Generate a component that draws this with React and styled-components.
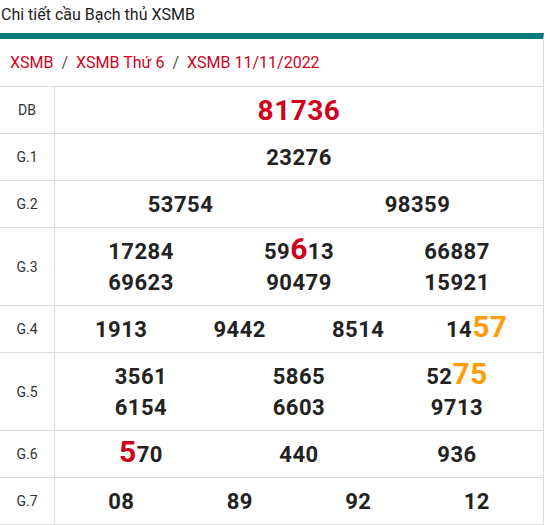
import React from "react";
import styled, { createGlobalStyle } from "styled-components";

const GlobalStyle = createGlobalStyle`
  body {
    margin: 0;
    background: #fff;
    font-family: Roboto, "Liberation Sans", sans-serif;
  }
`;

const Page = styled.div`
  width: 544px;
`;

const Title = styled.h2`
  margin: 0;
  height: 33px;
  line-height: 30px;
  padding-left: 1px;
  font-size: 16px;
  font-weight: 400;
  color: #222;
`;

const Panel = styled.div`
  border-top: 6px solid #067b7d;
  border-right: 1px solid #ddd;
`;

const Crumbs = styled.div`
  height: 47px;
  display: flex;
  align-items: center;
  padding-left: 10px;
  font-size: 16px;
  color: #d0021b;
  border-bottom: 1px solid #ddd;
`;

const Sep = styled.span`
  color: #555;
  margin: 0 8px;
`;

const Row = styled.div`
  display: flex;
  border-bottom: 1px solid #ddd;
`;

const Label = styled.div`
  width: 54px;
  flex: none;
  border-right: 1px solid #ddd;
  display: flex;
  align-items: center;
  justify-content: center;
  font-size: 14px;
  color: #333;
`;

const Numbers = styled.div`
  flex: 1;
  display: grid;
  grid-template-columns: repeat(${(p) => p.cols}, 1fr);
  padding: 8px 7px 7px;
  align-items: center;
`;

const Num = styled.div`
  text-align: center;
  line-height: 31px;
  font-size: ${(p) => (p.big ? "28px" : "22px")};
  font-weight: 700;
  color: ${(p) => (p.big ? "#d0021b" : "#222")};
  letter-spacing: 0.5px;
`;

const Hit = styled.span`
  font-size: 30px;
  line-height: 20px;
  color: ${(p) => (p.tone === "orange" ? "#ff9d0a" : "#d0021b")};
`;

const rows = [
  { label: "DB", cols: 1, big: true, nums: ["81736"] },
  { label: "G.1", cols: 1, nums: ["23276"] },
  { label: "G.2", cols: 2, nums: ["53754", "98359"] },
  {
    label: "G.3",
    cols: 3,
    nums: ["17284", ["59", ["6", "red"], "13"], "66887", "69623", "90479", "15921"],
  },
  { label: "G.4", cols: 4, nums: ["1913", "9442", "8514", ["14", ["57", "orange"]]] },
  {
    label: "G.5",
    cols: 3,
    nums: ["3561", "5865", ["52", ["75", "orange"]], "6154", "6603", "9713"],
  },
  { label: "G.6", cols: 3, nums: [[["5", "red"], "70"], "440", "936"] },
  { label: "G.7", cols: 4, nums: ["08", "89", "92", "12"] },
];

function renderNum(n) {
  if (typeof n === "string") return n;
  return n.map((part, i) =>
    typeof part === "string" ? (
      <span key={i}>{part}</span>
    ) : (
      <Hit key={i} tone={part[1]}>
        {part[0]}
      </Hit>
    )
  );
}

export default function App() {
  return (
    <Page>
      <GlobalStyle />
      <Title>Chi tiết cầu Bạch thủ XSMB</Title>
      <Panel>
        <Crumbs>
          <span>XSMB</span>
          <Sep>/</Sep>
          <span>XSMB Thứ 6</span>
          <Sep>/</Sep>
          <span>XSMB 11/11/2022</span>
        </Crumbs>
        {rows.map((r) => (
          <Row key={r.label}>
            <Label>{r.label}</Label>
            <Numbers cols={r.cols}>
              {r.nums.map((n, i) => (
                <Num key={i} big={r.big}>
                  {renderNum(n)}
                </Num>
              ))}
            </Numbers>
          </Row>
        ))}
      </Panel>
    </Page>
  );
}
